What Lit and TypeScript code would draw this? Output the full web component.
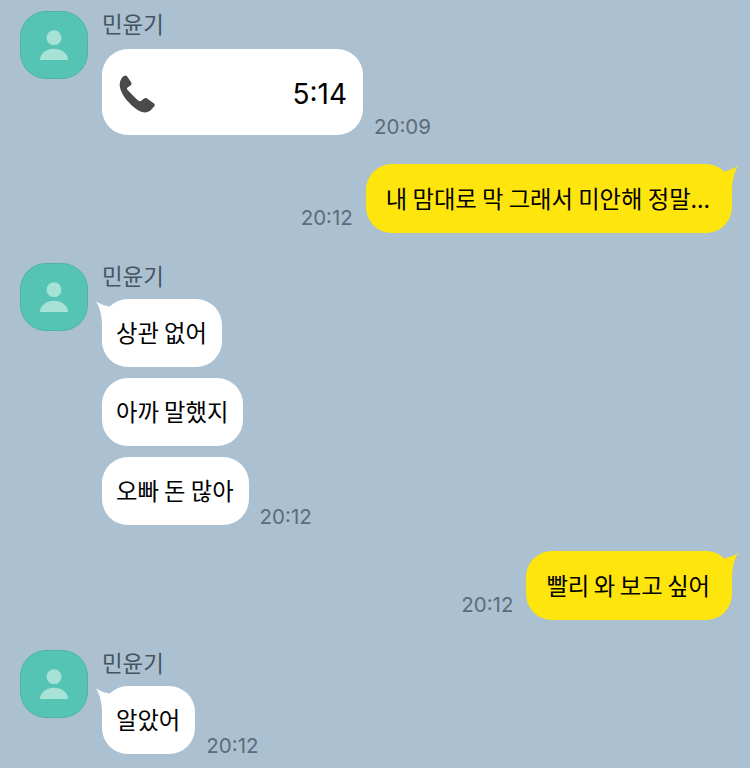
import { LitElement, html, css, svg } from "lit";
import { customElement } from "lit/decorators.js";

const person = svg`<svg class="person" viewBox="0 0 68 68" width="68" height="68" aria-hidden="true">
  <circle cx="34" cy="26.700" r="7.400" fill="#a7e2d6"/>
  <path d="M20 49C20 42 27 37.700 34 37.700S48 42 48 49Z" fill="#a7e2d6"/>
</svg>`;

const phone = svg`<svg class="phone" viewBox="0 0 36 38" width="36" height="38" aria-hidden="true">
  <path d="M5 1C3 2 1 5 .7 9C.5 14 3.500 20 8 25.500C12.500 30.500 18 35.500 23 37C26 37.800 29.500 37.500 32 35L35.500 31C36 30 35.800 29 35 28.500L27.800 23.300C27 22.800 26 22.800 25 23.500L22 26C21 26.500 19.500 26 18.500 25C15 22 11.500 18 9 15.500C7.800 14.300 7.500 13.500 8.300 12.800L11.500 10.500C12.500 9.500 12.800 8.500 12.300 7.500L8 1.300C7.300 .3 6 .3 5 1Z" fill="#4a4a4a"/>
</svg>`;

@customElement("app-root")
export class AppRoot extends LitElement {
  static styles = css`
    :host {
      display: block;
      width: 750px;
      height: 768px;
      overflow: hidden;
      background: #abc1d1;
      font-family: "Noto Sans CJK KR", "Noto Sans", sans-serif;
      color: #000;
    }
    .page {
      display: flex;
      flex-direction: column;
      padding-top: 11px;
    }
    .in {
      display: flex;
      gap: 14px;
      padding-left: 20px;
    }
    .avatar {
      width: 68px;
      height: 68px;
      box-sizing: border-box;
      flex: none;
      border-radius: 26px;
      background: #56c4b5;
      border: 1px solid #4db5a8;
      display: flex;
      align-items: center;
      justify-content: center;
    }
    .person {
      flex: none;
    }
    .body {
      display: flex;
      flex-direction: column;
      gap: 11px;
    }
    .name {
      height: 25px;
      font-size: 22.400px;
      line-height: 24px;
      color: #465461;
    }
    .line {
      display: flex;
      align-items: flex-end;
      gap: 11px;
    }
    .line .time {
      margin-bottom: -2px;
    }
    .bubble {
      position: relative;
      height: 68px;
      box-sizing: border-box;
      display: flex;
      align-items: center;
      padding: 0 15px 2px 14px;
      border-radius: 26px;
      background: #fff;
      font-size: 23.300px;
      white-space: nowrap;
    }
    .call {
      width: 261px;
      height: 86px;
      margin-top: 2px;
      justify-content: space-between;
      padding: 4px 16px 0 17px;
      font-family: Inter, sans-serif;
      font-size: 28px;
    }
    .time {
      font-family: Inter, "Noto Sans", sans-serif;
      font-size: 20.500px;
      line-height: 20px;
      color: #5d6c79;
      white-space: nowrap;
    }
    .out {
      display: flex;
      justify-content: flex-end;
      align-items: flex-end;
      gap: 13px;
      padding-right: 18px;
    }
    .out .time {
      padding-bottom: 5px;
    }
    .out .bubble {
      background: #fee50e;
      height: 69px;
      padding: 0 22px 2px 20px;
    }
    .out .tight {
      word-spacing: -0.700px;
    }
    .tail {
      position: absolute;
      top: 0;
    }
    .tail-l {
      left: -6px;
    }
    .tail-r {
      right: -6px;
    }
    .g1 {
      margin-top: 29px;
    }
    .g2 {
      margin-top: 30px;
    }
    .g3 {
      margin-top: 26px;
    }
    .g4 {
      margin-top: 30px;
    }
  `;

  private tailL() {
    return svg`<svg class="tail tail-l" viewBox="0 0 22 30" width="22" height="30" aria-hidden="true"><path d="M0 2.500C4.500 5 8.500 7 12.500 7L17 20L6 27C6 18 4 8 0 2.500Z" fill="#fff"/></svg>`;
  }

  private tailR() {
    return svg`<svg class="tail tail-r" viewBox="0 0 22 30" width="22" height="30" aria-hidden="true"><path d="M22 2C17.500 4.500 13.500 6.500 9.500 7L5 20L16 27C16 18 18 8 22 2Z" fill="#fee50e"/></svg>`;
  }

  private head(body: unknown, cls = "") {
    return html`<div class="in ${cls}">
      <div class="avatar">${person}</div>
      <div class="body">
        <div class="name">민윤기</div>
        ${body}
      </div>
    </div>`;
  }

  render() {
    return html`<div class="page">
      ${this.head(html`<div class="line">
        <div class="bubble call">${phone}<span>5:14</span></div>
        <span class="time">20:09</span>
      </div>`)}

      <div class="out g1">
        <span class="time">20:12</span>
        <div class="bubble">내 맘대로 막 그래서 미안해 정말...${this.tailR()}</div>
      </div>

      ${this.head(html`<div class="line"><div class="bubble">상관 없어${this.tailL()}</div></div>
        <div class="line"><div class="bubble">아까 말했지</div></div>
        <div class="line"><div class="bubble">오빠 돈 많아</div><span class="time">20:12</span></div>`, "g2")}

      <div class="out g3">
        <span class="time">20:12</span>
        <div class="bubble tight">빨리 와 보고 싶어${this.tailR()}</div>
      </div>

      ${this.head(html`<div class="line"><div class="bubble">알았어${this.tailL()}</div><span class="time">20:12</span></div>`, "g4")}
    </div>`;
  }
}
